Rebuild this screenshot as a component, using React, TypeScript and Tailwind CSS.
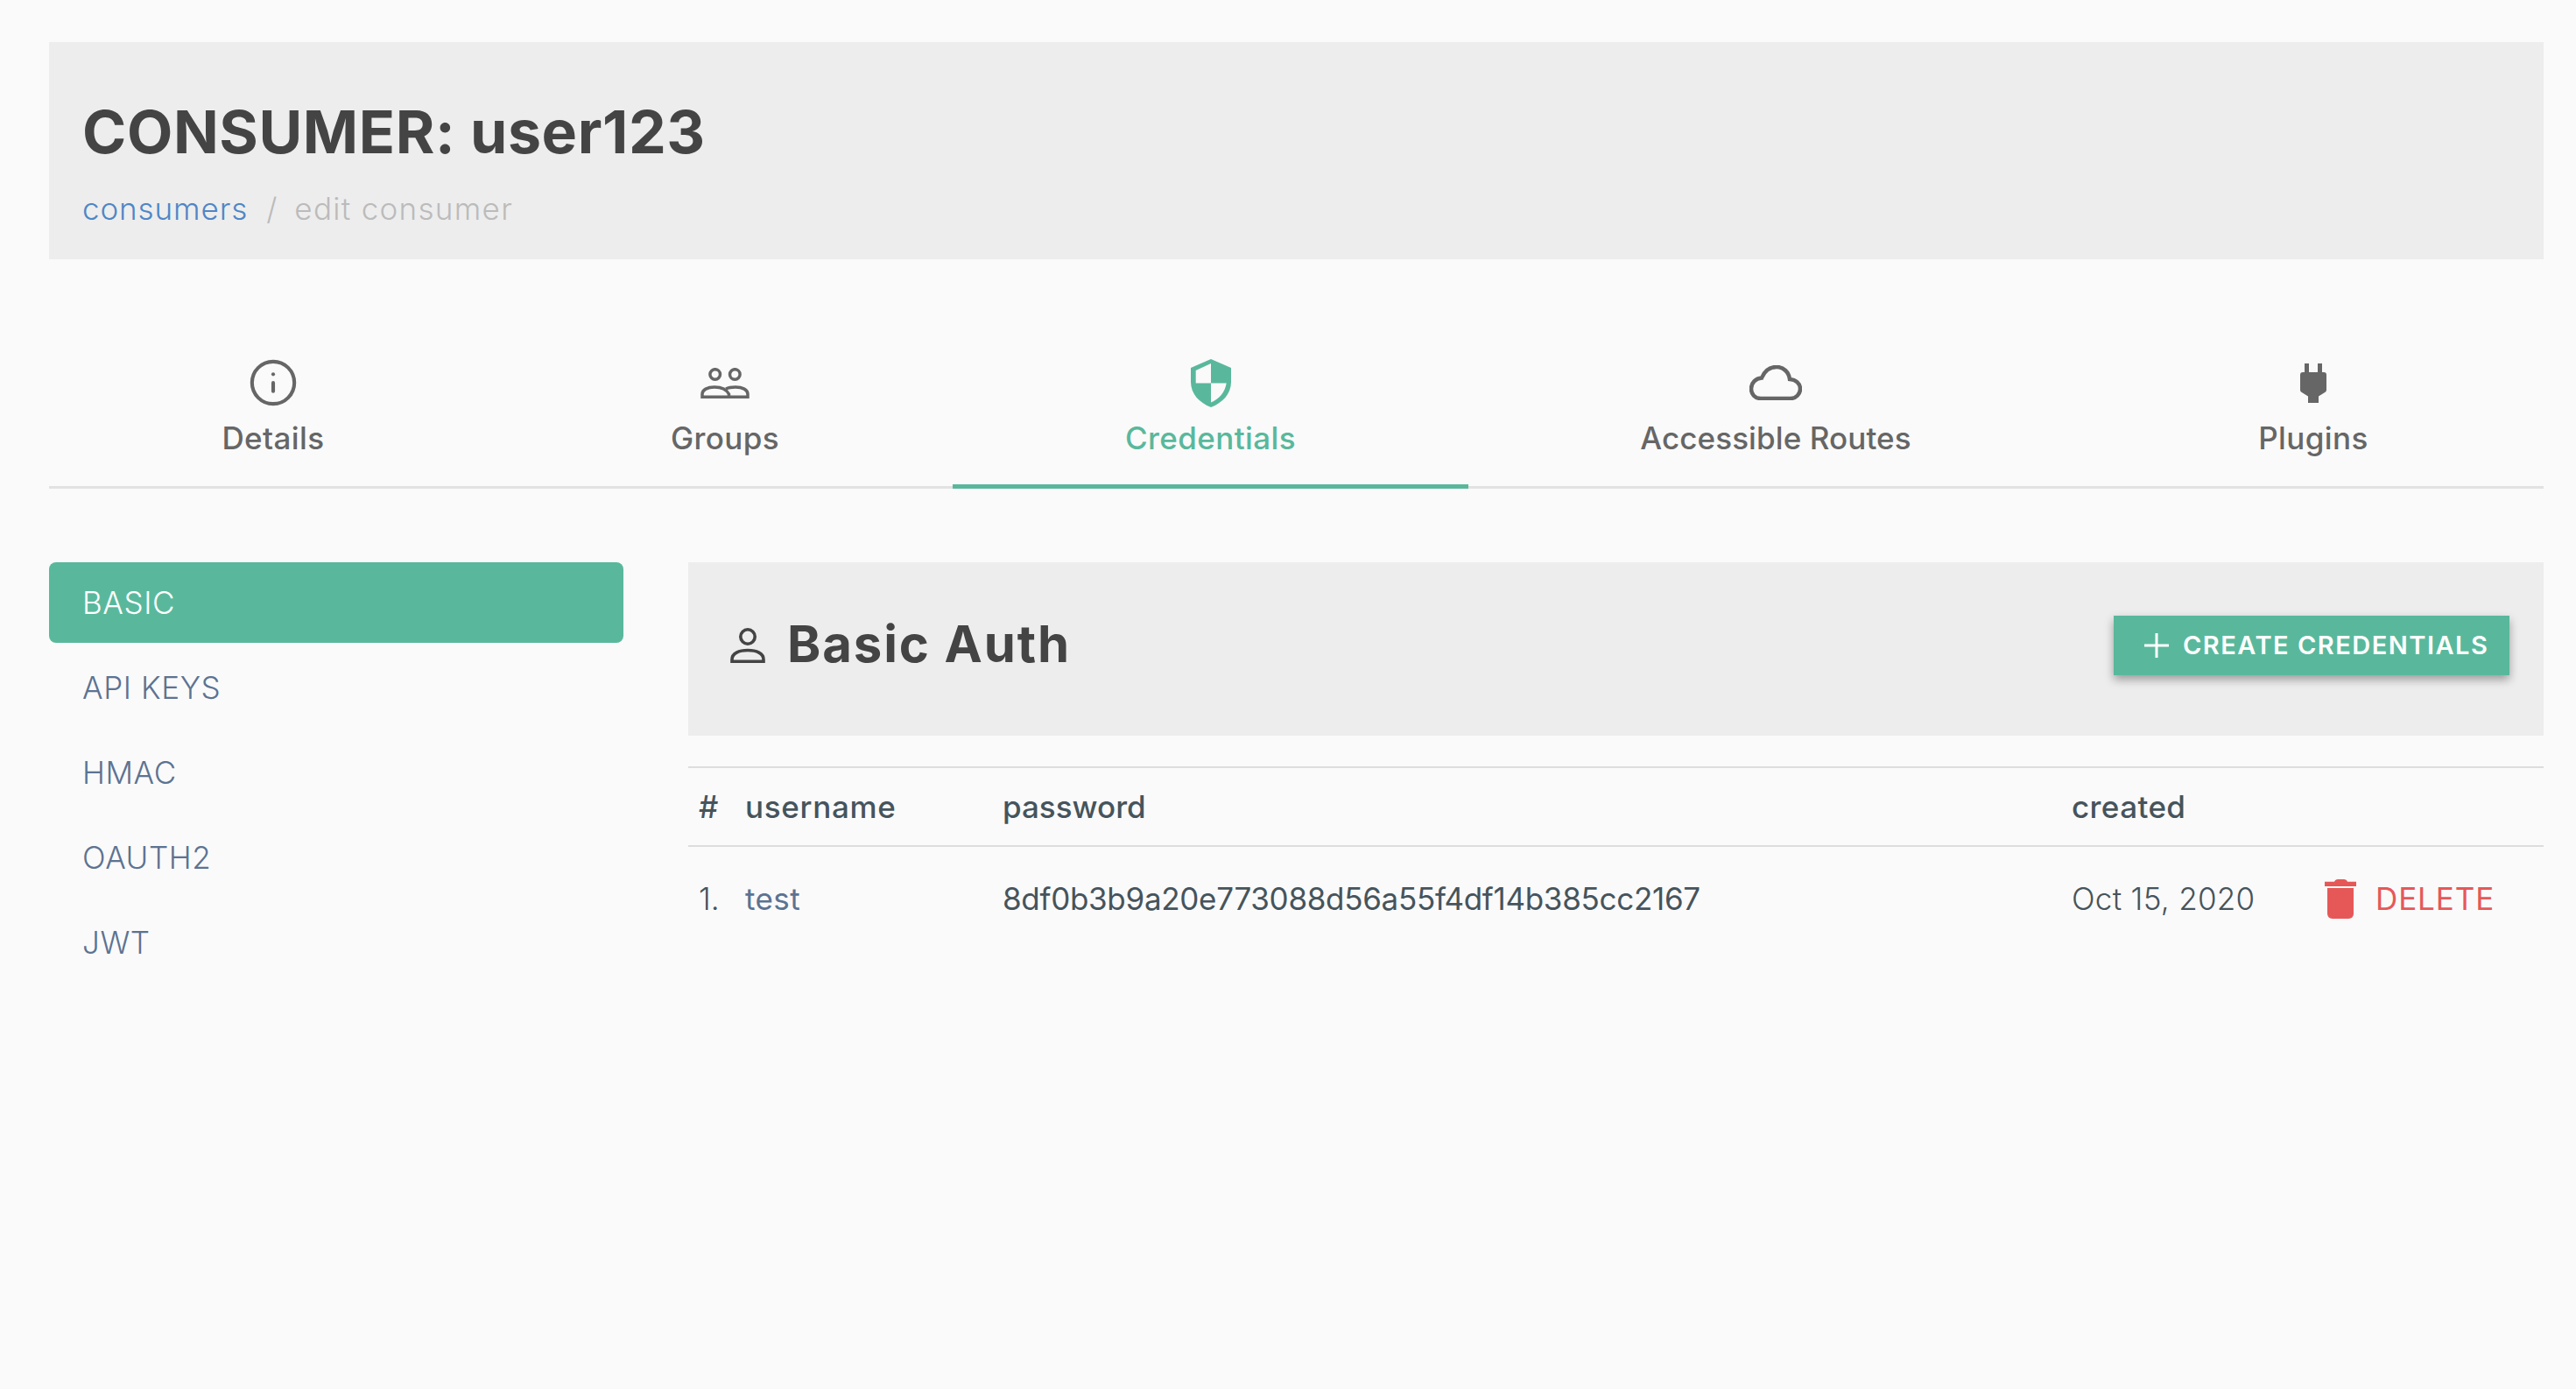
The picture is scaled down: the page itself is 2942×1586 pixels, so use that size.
import { Info } from "lucide-react";

const font = { fontFamily: "Inter, 'Liberation Sans', sans-serif" };

const GroupsIcon = () => (
  <svg width="56" height="35" viewBox="0 0 56 35" fill="none" stroke="#666" strokeWidth="3.5">
    <circle cx="16.700" cy="7.500" r="5.800" />
    <circle cx="39.300" cy="7.500" r="5.800" />
    <path d="M2 33.300V30c0-5 6-8 14-8s14 3 16.500 8v3.300z" />
    <path d="M29 24c3-1.500 7-2 11-2 8 0 14 3 14 8v3.300H32.500" />
  </svg>
);

const ShieldIcon = () => (
  <svg width="46" height="55" viewBox="0 0 46 55">
    <path d="M23 0L46 10V26C46 40 36 50 23 55 10 50 0 40 0 26V10z" fill="#59b89c" />
    <path d="M23 5L5.700 13V27.500H23zM23 27.500H40.700C39 38 32 46 23 49.500z" fill="#fafafa" />
  </svg>
);

const CloudIcon = () => (
  <svg width="60" height="40" viewBox="0 0 60 40" fill="none" stroke="#666" strokeWidth="4.500">
    <path d="M13 38C6 38 2 33 2 27 2 20 7 15 14 14.500 17 7 23 2 31 2 39 2 45 8 46 16 53 16.500 58 21 58 27 58 33 53 38 47 38z" />
  </svg>
);

const PlugIcon = () => (
  <svg width="30" height="45" viewBox="0 0 30 45" fill="#666">
    <path d="M5 0h5v10h10V0h5v10h2c2 0 3 1 3 3v17c0 1-.5 2-1 2.500l-8 5V45H9V37.500l-8-5C.5 32 0 31 0 30V13c0-2 1-3 3-3h2z" />
  </svg>
);

const PersonIcon = () => (
  <svg width="40" height="40" viewBox="0 0 40 40" fill="none" stroke="#444" strokeWidth="3.600">
    <circle cx="20" cy="10" r="8.200" />
    <path d="M2 38.200V36C2 29 10 25.500 20 25.500S38 29 38 36v2.200z" />
  </svg>
);

const PlusIcon = () => (
  <svg width="28" height="28" viewBox="0 0 28 28" fill="none" stroke="#fff" strokeWidth="3">
    <path d="M14 0v28M0 14h28" />
  </svg>
);

const TrashIcon = () => (
  <svg width="36" height="45" viewBox="0 0 36 45" fill="#e65858">
    <path d="M11 2.700C12 1 13 0 15 0h7c2 0 3 1 4 2.700h10V8H0V2.700z" />
    <path d="M3 10h30v29c0 3-2 6-6 6H9c-4 0-6-3-6-6z" />
  </svg>
);

const tabs = [
  { label: "Details", icon: <Info size={58} strokeWidth={1.7} color="#666" />, width: "w-[512px]", tracking: "tracking-[0.4px]", active: false },
  { label: "Groups", icon: <GroupsIcon />, width: "w-[520px]", tracking: "tracking-[0.4px]", active: false },
  { label: "Credentials", icon: <ShieldIcon />, width: "w-[589px]", tracking: "tracking-[0.4px]", active: true },
  { label: "Accessible Routes", icon: <CloudIcon />, width: "w-[702px]", tracking: "tracking-[0.1px]", active: false },
  { label: "Plugins", icon: <PlugIcon />, width: "w-[526px]", tracking: "tracking-[0.4px]", active: false },
];

const methods = ["BASIC", "API KEYS", "HMAC", "OAUTH2", "JWT"];

export default function App() {
  return (
    <div className="min-h-screen bg-[#fafafa] pt-[48px] pl-[56px] pr-[37px]" style={font}>
      {/* page header */}
      <div className="h-[248px] bg-[#ededed] px-[38px] pt-[58px]">
        <h1 className="text-[68px] leading-[88px] font-bold tracking-[0.6px] text-[#444]">CONSUMER: user123</h1>
        <div className="mt-[22px] flex items-center text-[35px] leading-[44px] font-light">
          <span className="tracking-[0.9px] text-[#4f86c6]">consumers</span>
          <span className="ml-[21px] mr-[20px] text-[#bbb]">/</span>
          <span className="tracking-[1.3px] text-[#bbb]">edit consumer</span>
        </div>
      </div>

      {/* tabs */}
      <div className="mt-[104px] flex h-[158px] border-b-[3px] border-[#e2e2e2]">
        {tabs.map((tab) => (
          <div
            key={tab.label}
            className={`${tab.width} -mb-[3px] flex flex-col items-center pt-[5px] ${
              tab.active ? "border-b-[5px] border-[#59b89c] text-[#59b89c]" : "text-[#666]"
            }`}
          >
            <div className="flex h-[64px] items-center justify-center">{tab.icon}</div>
            <span className={`${tab.tracking} mt-[9px] text-[35px] leading-[44px] font-medium`}>{tab.label}</span>
          </div>
        ))}
      </div>

      <div className="mt-[84px] flex gap-[74px]">
        {/* credential types */}
        <div className="flex w-[656px] flex-col gap-[5px]">
          {methods.map((method, i) => (
            <div
              key={method}
              className={`flex h-[92px] items-center rounded-[8px] px-[38px] text-[35px] font-light tracking-[0.6px] ${
                i === 0 ? "bg-[#59b89c] text-white" : "text-[#5c7392]"
              }`}
            >
              {method}
            </div>
          ))}
        </div>

        <div className="flex-1">
          <div className="flex h-[198px] items-center justify-between bg-[#ededed] pb-[8px] pl-[48px] pr-[39px]">
            <div className="flex items-center gap-[25px]">
              <PersonIcon />
              <h2 className="pb-[3px] text-[58px] font-bold tracking-[1.9px] text-[#444]">Basic Auth</h2>
            </div>
            <button className="flex h-[68px] w-[452px] items-center gap-[16px] bg-[#59b89c] pl-[35px] text-[29px] font-semibold tracking-[1.5px] text-white shadow-[0_5px_10px_rgba(0,0,0,0.35)]">
              <PlusIcon />
              CREATE CREDENTIALS
            </button>
          </div>

          {/* table */}
          <div className="mt-[35px] text-[#46545c]">
            <div className="grid h-[92px] grid-cols-[64px_295px_1221px_289px_1fr] items-center border-y-[2px] border-[#ddd] text-[35px] font-medium">
              <span className="pl-[12px]">#</span>
              <span className="pl-[1px] tracking-[0.7px]">username</span>
              <span>password</span>
              <span className="tracking-[0.4px]">created</span>
              <span />
            </div>
            <div className="grid h-[118px] grid-cols-[64px_295px_1221px_289px_1fr] items-center pt-[1px] text-[35px]">
              <span className="pl-[12px] font-light">1.</span>
              <span className="pl-[1px] tracking-[0.4px] text-[#5c7392]">test</span>
              <span className="tracking-[-0.3px]">8df0b3b9a20e773088d56a55f4df14b385cc2167</span>
              <span className="font-light tracking-[0.3px]">Oct 15, 2020</span>
              <span className="flex items-center gap-[22px] tracking-[0.9px] text-[#e65858]">
                <TrashIcon />
                DELETE
              </span>
            </div>
          </div>
        </div>
      </div>
    </div>
  );
}
